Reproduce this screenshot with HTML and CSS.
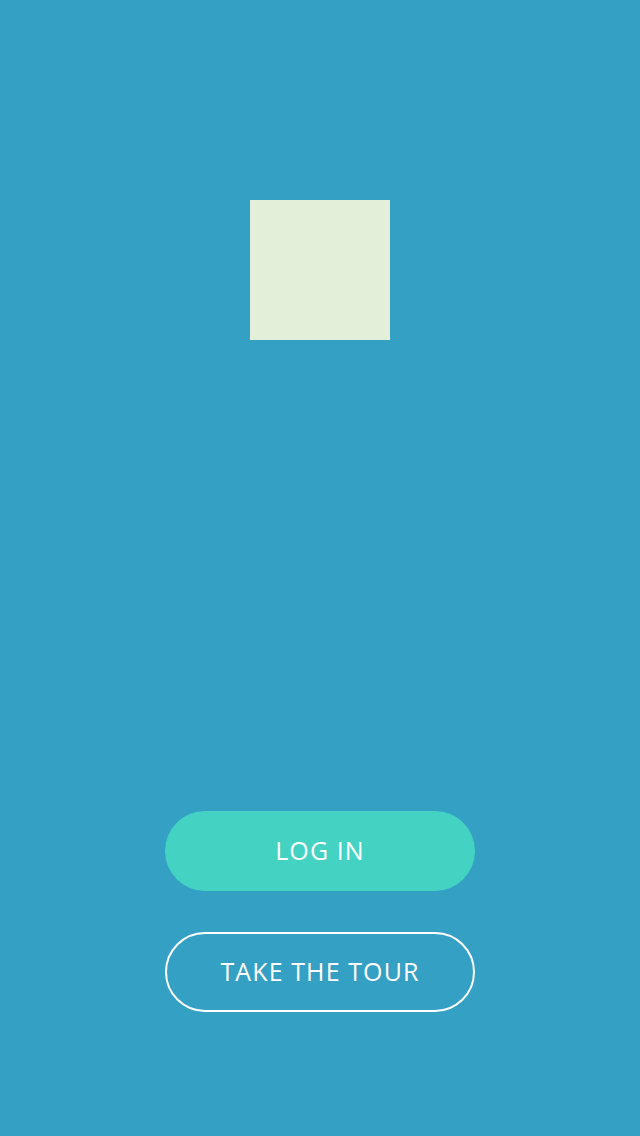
FILE: index.html
```html
<!DOCTYPE html>
<html>
<head>
<meta charset="utf-8">
<link rel="stylesheet" href="styles.css">
</head>
<body>
<main class="screen">
  <div class="logo"></div>
  <div class="actions">
    <button class="btn btn-primary">LOG IN</button>
    <button class="btn btn-outline">TAKE THE TOUR</button>
  </div>
</main>
</body>
</html>
```
FILE: styles.css
```css
html, body {
  margin: 0;
  padding: 0;
  background: #34a0c4;
}
.screen {
  width: 640px;
  height: 1136px;
  display: flex;
  flex-direction: column;
  align-items: center;
  padding-top: 200px;
  box-sizing: border-box;
}
.logo {
  width: 140px;
  height: 140px;
  background: #e3efd9;
}
.actions {
  margin-top: 471px;
  display: flex;
  flex-direction: column;
  gap: 41px;
}
.btn {
  width: 310px;
  height: 80px;
  border-radius: 40px;
  font-family: "Open Sans", "Noto Sans", sans-serif;
  font-size: 25px;
  font-weight: 500;
  letter-spacing: 1.1px;
  color: #ffffff;
  display: flex;
  align-items: center;
  justify-content: center;
  padding: 0 0 3px 0;
  box-sizing: border-box;
  cursor: pointer;
}
.btn-primary {
  background: #44d2c2;
  border: none;
}
.btn-outline {
  background: transparent;
  border: 2px solid #ffffff;
}
```
